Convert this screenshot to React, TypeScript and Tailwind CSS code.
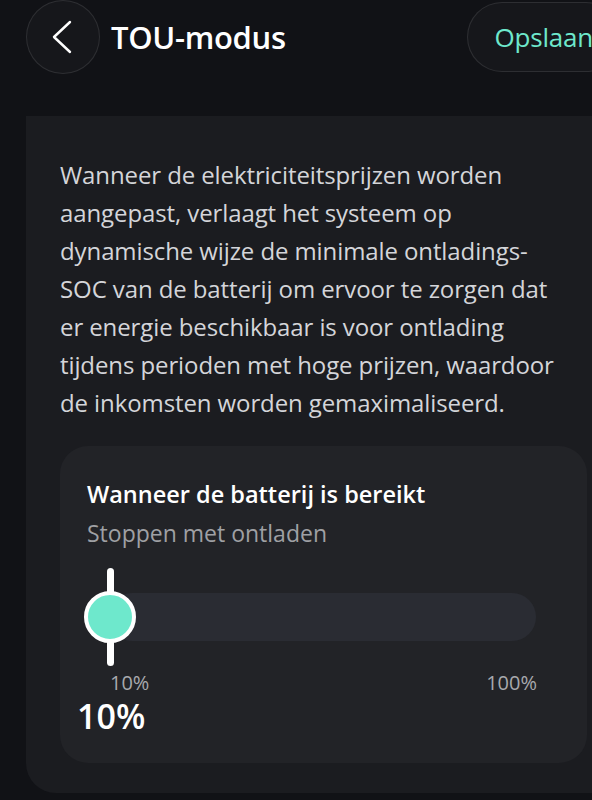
const font = { fontFamily: "'Open Sans', 'Noto Sans', sans-serif" };

const lines = [
  "Wanneer de elektriciteitsprijzen worden",
  "aangepast, verlaagt het systeem op",
  "dynamische wijze de minimale ontladings-",
  "SOC van de batterij om ervoor te zorgen dat",
  "er energie beschikbaar is voor ontlading",
  "tijdens perioden met hoge prijzen, waardoor",
  "de inkomsten worden gemaximaliseerd.",
];

function Header() {
  return (
    <div className="flex items-center h-[74px] pl-[26px]">
      <button className="w-[74px] h-[74px] rounded-full border border-white/10 bg-[#16171b] flex items-center justify-center shrink-0">
        <svg width="22" height="34" viewBox="0 0 22 34" fill="none" className="-ml-[3px]">
          <polyline
            points="19,2 3,17 19,32"
            stroke="white"
            strokeWidth="2.4"
            strokeLinecap="round"
            strokeLinejoin="round"
          />
        </svg>
      </button>
      <h1 className="ml-[11px] text-[31px] font-semibold text-white tracking-[-0.3px]">TOU-modus</h1>
      <div className="ml-auto -mr-[29px] h-[70px] pl-[26px] pr-[27px] rounded-full border border-white/10 bg-[#16171b] flex items-center">
        <span className="text-[26px] text-[#6ee8cc] tracking-[-0.2px]">Opslaan</span>
      </div>
    </div>
  );
}

function Slider() {
  return (
    <div className="mt-[20px] pl-[26px] pr-[51px]">
      <div className="relative h-[98px] flex items-center">
        <div className="h-[48px] flex-1 ml-[22px] rounded-full bg-[#2a2c33]" />
        <div className="absolute left-[24px] top-0 -translate-x-1/2 h-full flex items-center justify-center">
          <div className="absolute w-[7px] h-full rounded-full bg-white" />
          <div className="relative w-[52px] h-[52px] rounded-full bg-[#6ee8cc] border-[4px] border-white" />
        </div>
      </div>
      <div className="flex justify-between text-[20px] leading-[20px] text-[#a8a9ad] mt-[7px] ml-[24px] -mr-[1px]">
        <span>10%</span>
        <span>100%</span>
      </div>
      <div className="text-[34px] font-semibold text-white leading-none mt-[6px] -ml-[9px]">10%</div>
    </div>
  );
}

export default function App() {
  return (
    <div className="min-h-[800px] bg-[#111216] overflow-hidden" style={font}>
      <Header />
      <div className="mt-[42px] ml-[26px] -mr-[30px] bg-[#1b1c20] rounded-bl-[30px] pt-[40px] pl-[34px] pr-[35px] pb-[30px]">
        <p className="text-[24px] leading-[38px] text-[#d4d5d9] whitespace-nowrap tracking-[-0.1px]">
          {lines.map((l) => (
            <span key={l} className="block">
              {l}
            </span>
          ))}
        </p>
        <div className="mt-[24px] w-[527px] bg-[#222327] rounded-[28px] pt-[33px] pb-[30px]">
          <div className="pl-[27px]">
            <div className="text-[23.5px] leading-[30px] font-semibold text-white">Wanneer de batterij is bereikt</div>
            <div className="text-[23px] leading-[30px] text-[#9fa0a4] mt-[9px]">Stoppen met ontladen</div>
          </div>
          <Slider />
        </div>
      </div>
    </div>
  );
}
